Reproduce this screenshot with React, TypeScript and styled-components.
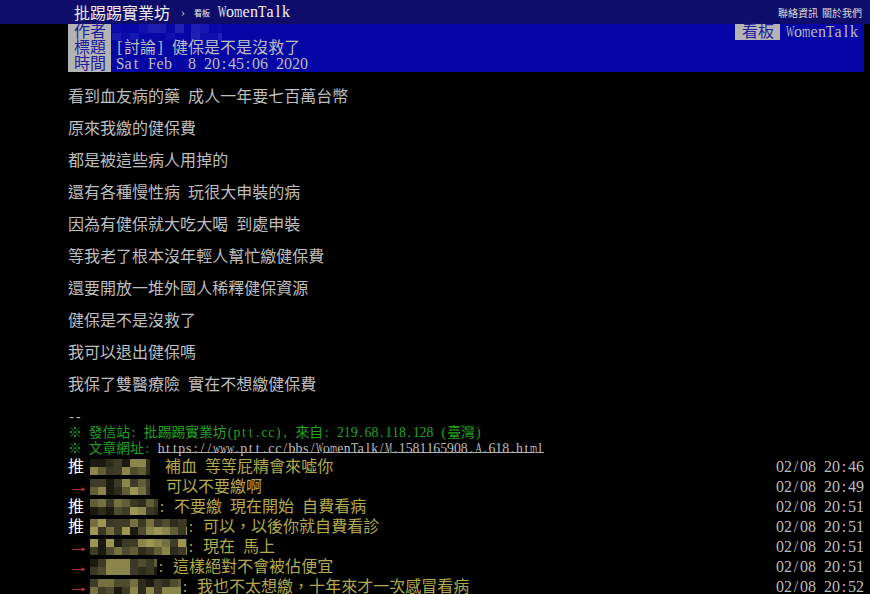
import React from "react";
import styled, { createGlobalStyle } from "styled-components";

const GlobalStyle = createGlobalStyle`
  html, body { margin: 0; padding: 0; background: #000; }
  body {
    font-family: "Liberation Serif", "Noto Sans CJK TC", "Noto Sans CJK JP", serif;
    color: #bbb;
    overflow: hidden;
  }
  a { color: inherit; text-decoration: none; }
`;

/* ---------- half-width grid text (MingLiU-like) ---------- */
const WIDTHS: Record<string, number> = {
  A: 0.722, B: 0.667, C: 0.667, D: 0.722, E: 0.611, F: 0.556, G: 0.722, H: 0.722,
  K: 0.722, L: 0.611, M: 0.889, N: 0.722, O: 0.722, P: 0.556, Q: 0.722, R: 0.667,
  S: 0.556, T: 0.611, U: 0.722, V: 0.722, W: 0.944, X: 0.722, Y: 0.722, Z: 0.611,
  m: 0.778, w: 0.722,
};

const Cell = styled.span<{ $w: number }>`
  display: inline-block;
  width: 0.5em;
  text-align: ${(p) => (p.$w > 0.5 ? "left" : "center")};
  white-space: pre;
  letter-spacing: ${(p) => (p.$w > 0.5 ? `${(0.5 - p.$w).toFixed(3)}em` : "normal")};
  transform-origin: left center;
  transform: ${(p) => (p.$w > 0.5 ? `scaleX(${(0.52 / p.$w).toFixed(3)})` : "none")};
`;

const Mono = ({ text }: { text: string }) => (
  <>
    {Array.from(text).map((ch, i) => {
      const c = ch.codePointAt(0) ?? 0;
      if (c < 0x2000) {
        return (
          <Cell key={i} $w={WIDTHS[ch] ?? 0.5}>
            {ch === " " ? "\u00a0" : ch}
          </Cell>
        );
      }
      return <React.Fragment key={i}>{ch}</React.Fragment>;
    })}
  </>
);

/* ---------- mosaic (pixelated user ids) ---------- */
const MosaicSvg = styled.svg`
  display: block;
  flex: none;
`;

function Mosaic({ w, h, cell, palette, seed }: { w: number; h: number; cell: number; palette: string[]; seed: number }) {
  let s = (seed * 7919 + 104729) % 2147483647;
  const rnd = () => {
    s = (s * 16807) % 2147483647;
    return s / 2147483647;
  };
  rnd();
  rnd();
  const rects: React.ReactNode[] = [];
  for (let y = 0; y < h; y += cell) {
    for (let x = 0; x < w; x += cell) {
      rects.push(
        <rect key={`${x}-${y}`} x={x} y={y} width={cell} height={cell} fill={palette[Math.floor(rnd() * palette.length)]} />
      );
    }
  }
  return (
    <MosaicSvg width={w} height={h} viewBox={`0 0 ${w} ${h}`} shapeRendering="crispEdges">
      {rects}
    </MosaicSvg>
  );
}

const OLIVE = ["#1a1a10", "#2e2d1c", "#3e3c26", "#4e4c2e", "#615e36", "#747040", "#8a854a", "#9c9652", "#3a3924"];
const BLUES = ["#0808a8", "#1010ac", "#1616b0", "#1c1cb3", "#0c0caa", "#2020b5"];

/* ---------- layout ---------- */
const Page = styled.div`
  width: 870px;
  min-height: 594px;
  background: #000;
`;

const TopBar = styled.header`
  height: 24px;
  background: #0e0e6a;
  display: flex;
  align-items: center;
  padding: 0 8px 0 74px;
  box-sizing: border-box;
`;

const Brand = styled.a`
  font-family: "Noto Sans CJK TC", sans-serif;
  font-size: 16px;
  font-weight: 400;
  line-height: 24px;
  color: #ececec;
`;

const Crumb = styled.span`
  font-size: 12px;
  color: #c8c8c8;
  margin: 0 9px 0 11px;
`;

const BoardLabel = styled.span`
  font-family: "Noto Sans CJK TC", sans-serif;
  font-size: 8px;
  color: #eee;
  margin-right: 8px;
`;

const BoardName = styled.a`
  font-size: 16px;
  line-height: 24px;
  color: #f4f4f4;
`;

const TopLinks = styled.nav`
  margin-left: auto;
  display: flex;
  gap: 4px;
  font-family: "Noto Sans CJK TC", sans-serif;
  font-size: 10px;
  color: #dcdcdc;
`;

const Main = styled.main`
  padding: 0 6px 0 68px;
`;

const Meta = styled.section`
  background: #0606a4;
  margin-bottom: 1px;
`;

const MetaLine = styled.div`
  display: flex;
  height: 16px;
  font-size: 16px;
  line-height: 16px;
`;

const MetaTag = styled.span<{ $right?: boolean }>`
  background: #b4b4b4;
  color: #1e1e9e;
  padding: ${(p) => (p.$right ? "0 6px 0 7px" : "0 5px 0 6px")};
  height: 16px;
`;

const MetaValue = styled.span<{ $right?: boolean }>`
  color: #bdbdbd;
  padding: ${(p) => (p.$right ? "0 6px" : "0 0 0 5px")};
  white-space: pre;
`;

const MetaRight = styled.div`
  margin-left: auto;
  display: flex;
`;

const MetaMosaic = styled.div`
  display: flex;
  margin-left: 1px;
  gap: 7px;
`;

const Body = styled.div`
  font-size: 16px;
  line-height: 16px;
  color: #bebebe;
`;

const Line = styled.div`
  min-height: 16px;
  white-space: pre;
`;

const SigLine = styled.div<{ $green?: boolean }>`
  font-size: 13.8px;
  line-height: 16px;
  height: 16px;
  white-space: pre;
  color: ${(p) => (p.$green ? "#22a322" : "#bbb")};
`;

const UrlLink = styled.a`
  color: #bdbdbd;
  & > span {
    background: linear-gradient(#aaa, #aaa) no-repeat 0 calc(100% - 4px) / 100% 1px;
  }
`;

const PushRow = styled.div`
  display: flex;
  align-items: center;
  height: 20px;
  line-height: 20px;
  font-size: 16px;
  white-space: pre;
`;

const PushTag = styled.span<{ $arrow?: boolean }>`
  width: 22px;
  flex: none;
  color: ${(p) => (p.$arrow ? "#d33a4e" : "#ffffff")};
  & > i {
    display: inline-block;
    font-style: normal;
    transform-origin: left center;
    transform: scaleX(1.35);
  }
`;

const PushContent = styled.span<{ $gap: number }>`
  color: #b3aa4c;
  margin-left: ${(p) => p.$gap}px;
`;

const PushTime = styled.span`
  margin-left: auto;
  color: #bdbdbd;
`;

const bodyLines = [
  "",
  "看到血友病的藥 成人一年要七百萬台幣",
  "",
  "原來我繳的健保費",
  "",
  "都是被這些病人用掉的",
  "",
  "還有各種慢性病 玩很大申裝的病",
  "",
  "因為有健保就大吃大喝 到處申裝",
  "",
  "等我老了根本沒年輕人幫忙繳健保費",
  "",
  "還要開放一堆外國人稀釋健保資源",
  "",
  "健保是不是沒救了",
  "",
  "我可以退出健保嗎",
  "",
  "我保了雙醫療險 實在不想繳健保費",
  "",
];

type Push = { tag: "推" | "→"; idW: number; gap: number; text: string; time: string };

const pushes: Push[] = [
  { tag: "推", idW: 60, gap: 15, text: "補血 等等屁精會來噓你", time: "02/08 20:46" },
  { tag: "→", idW: 60, gap: 16, text: "可以不要繳啊", time: "02/08 20:49" },
  { tag: "推", idW: 68, gap: 0, text: ": 不要繳 現在開始 自費看病", time: "02/08 20:51" },
  { tag: "推", idW: 97, gap: 0, text: ": 可以，以後你就自費看診", time: "02/08 20:51" },
  { tag: "→", idW: 97, gap: 0, text: ": 現在 馬上", time: "02/08 20:51" },
  { tag: "→", idW: 67, gap: 0, text: ": 這樣絕對不會被佔便宜", time: "02/08 20:51" },
  { tag: "→", idW: 91, gap: 0, text: ": 我也不太想繳，十年來才一次感冒看病", time: "02/08 20:52" },
];

export default function App() {
  return (
    <Page>
      <GlobalStyle />
      <TopBar>
        <Brand href="#">批踢踢實業坊</Brand>
        <Crumb>›</Crumb>
        <BoardLabel>看板</BoardLabel>
        <BoardName href="#">
          <Mono text="WomenTalk" />
        </BoardName>
        <TopLinks>
          <a href="#">聯絡資訊</a>
          <a href="#">關於我們</a>
        </TopLinks>
      </TopBar>
      <Main>
        <Meta>
          <MetaLine>
            <MetaTag>作者</MetaTag>
            <MetaMosaic>
              <Mosaic w={72} h={16} cell={9} palette={BLUES} seed={3} />
              <Mosaic w={31} h={16} cell={9} palette={BLUES} seed={9} />
            </MetaMosaic>
            <MetaRight>
              <MetaTag $right>看板</MetaTag>
              <MetaValue $right>
                <Mono text="WomenTalk" />
              </MetaValue>
            </MetaRight>
          </MetaLine>
          <MetaLine>
            <MetaTag>標題</MetaTag>
            <MetaValue>
              <Mono text="[討論] 健保是不是沒救了" />
            </MetaValue>
          </MetaLine>
          <MetaLine>
            <MetaTag>時間</MetaTag>
            <MetaValue>
              <Mono text="Sat Feb  8 20:45:06 2020" />
            </MetaValue>
          </MetaLine>
        </Meta>
        <Body>
          {bodyLines.map((l, i) => (
            <Line key={i}>
              <Mono text={l} />
            </Line>
          ))}
        </Body>
        <SigLine>
          <Mono text="--" />
        </SigLine>
        <SigLine $green>
          <Mono text="※ 發信站: 批踢踢實業坊(ptt.cc), 來自: 219.68.118.128 (臺灣)" />
        </SigLine>
        <SigLine $green>
          <Mono text="※ 文章網址: " />
          <UrlLink href="#">
            <Mono text="https://www.ptt.cc/bbs/WomenTalk/M.1581165908.A.618.html" />
          </UrlLink>
        </SigLine>
        {pushes.map((p, i) => (
          <PushRow key={i}>
            <PushTag $arrow={p.tag === "→"}>{p.tag === "→" ? <i>→</i> : p.tag}</PushTag>
            <Mosaic w={p.idW} h={16} cell={8} palette={OLIVE} seed={i * 5 + 2} />
            <PushContent $gap={p.gap}>
              <Mono text={p.text} />
            </PushContent>
            <PushTime>
              <Mono text={p.time} />
            </PushTime>
          </PushRow>
        ))}
      </Main>
    </Page>
  );
}
